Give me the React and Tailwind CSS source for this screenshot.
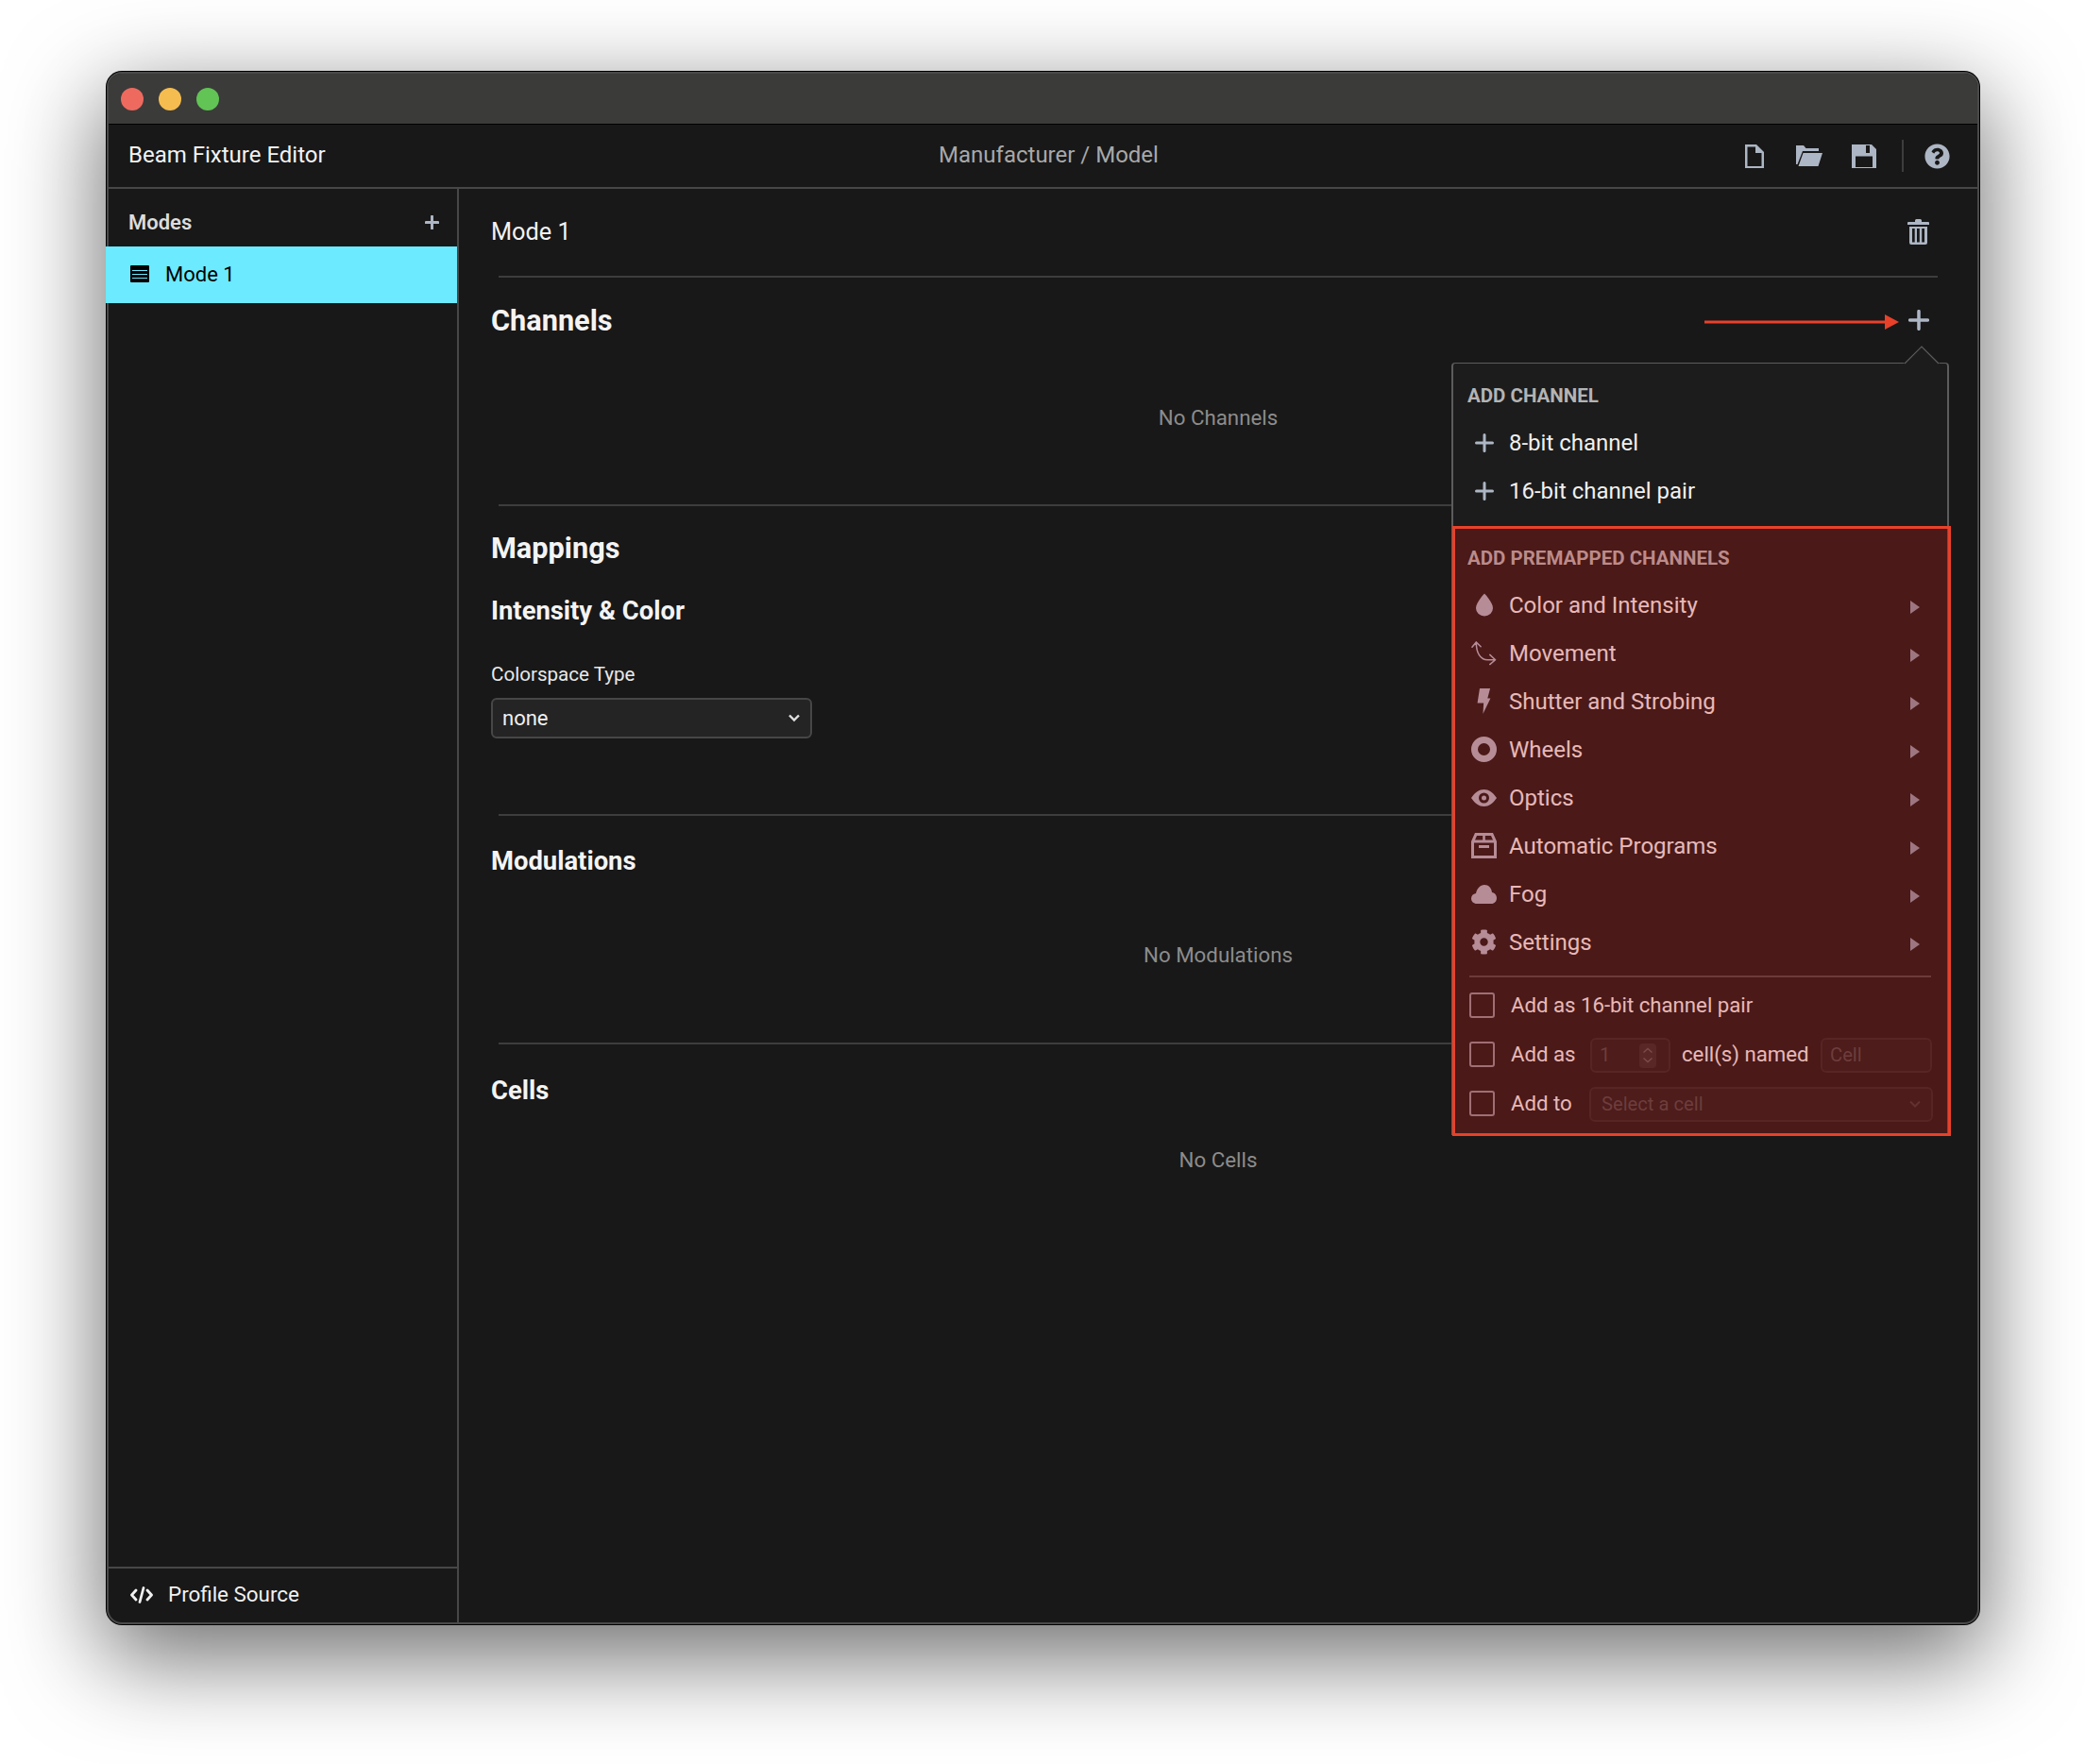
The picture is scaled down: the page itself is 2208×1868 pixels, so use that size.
import React from "react";
import { FaCog, FaQuestionCircle } from "react-icons/fa";

const Plus = ({ size = 20, w = 3 }) => (
  <svg width={size} height={size} viewBox="0 0 20 20" fill="none" stroke="currentColor" strokeWidth={w} strokeLinecap="round">
    <path d="M10 1.5V18.5M1.5 10H18.5" />
  </svg>
);

const Drop = () => (
  <svg width="18" height="25" viewBox="0 0 18 24" fill="currentColor">
    <path d="M9 0C9 0 0 9.5 0 15.5A9 8.5 0 0 0 18 15.5C18 9.5 9 0 9 0Z" />
  </svg>
);

const Move = () => (
  <svg width="28" height="27" viewBox="0 0 28 27" fill="none" stroke="currentColor" strokeWidth="1.6" strokeLinecap="round" strokeLinejoin="round">
    <path d="M1 7L5.5 1.5L10.5 6.5M5.5 2C5.5 13 10 21 18 21H26.5M20.5 15.5L26.5 21L20.5 26" />
  </svg>
);

const Bolt = () => (
  <svg width="15" height="27" viewBox="0 0 40 78" fill="currentColor">
    <path d="M7 0H39L31 30H40L17 78L19 45H0Z" />
  </svg>
);

const Ring = () => (
  <svg width="27" height="27" viewBox="0 0 27 27" fill="none" stroke="currentColor" strokeWidth="7">
    <circle cx="13.5" cy="13.5" r="10" />
  </svg>
);

const Eye = () => (
  <svg width="27" height="18" viewBox="0 0 27 18" fill="currentColor" fillRule="evenodd">
    <path d="M0 9C4 3 8.5 0 13.5 0C18.5 0 23 3 27 9C23 15 18.5 18 13.5 18C8.5 18 4 15 0 9ZM8 9A5.5 5.5 0 1 0 19 9A5.5 5.5 0 1 0 8 9ZM11 9A2.5 2.5 0 1 0 16 9A2.5 2.5 0 1 0 11 9Z" />
  </svg>
);

const Box = () => (
  <svg width="27" height="27" viewBox="0 0 27 27" fill="currentColor" fillRule="evenodd">
    <path d="M4 0H23L27 9V27H0V9ZM6 3H12.2V7.5H4ZM14.8 3H21L23 7.5H14.8ZM3 10.5H24V24H3ZM8 13H19V16H8Z" />
  </svg>
);

const Cloud = () => (
  <svg width="27" height="20" viewBox="0 0 27 20" fill="currentColor">
    <path d="M6 20C2.5 20 0 17.5 0 14.5C0 11.5 2 9.5 5 9C6 4 9.5 0 14 0C18.5 0 21.5 3.5 22 8C25 8.5 27 11 27 14C27 17.5 24.5 20 21.5 20Z" />
  </svg>
);

const FileIcon = () => (
  <svg width="20" height="25" viewBox="0 0 20 25" fill="currentColor" fillRule="evenodd">
    <path d="M0 0H12L20 8V25H0ZM2.5 2.5H11V9H17.5V23H2.5Z" />
  </svg>
);

const FolderIcon = () => (
  <svg width="28" height="22" viewBox="0 0 28 22" fill="currentColor">
    <path d="M0 0H8L10.5 3H24V6H7L1.5 20H0ZM7.5 8H28L23.5 22H2.5Z" />
  </svg>
);

const SaveIcon = () => (
  <svg width="26" height="25" viewBox="0 0 26 25" fill="currentColor" fillRule="evenodd">
    <path d="M0 0H21L26 5V25H0ZM4 12.5H22V24H4ZM15 1H19V9H15Z" />
  </svg>
);

const TrashIcon = () => (
  <svg width="23" height="27" viewBox="0 0 23 27" fill="currentColor" fillRule="evenodd">
    <path d="M8 1.5Q8 0 9.5 0H13.5Q15 0 15 1.5V3H22Q23 3 23 4V6H0V4Q0 3 1 3H8Z" />
    <path d="M2 8H21V25Q21 27 19 27H4Q2 27 2 25ZM5 10V24.5H7.7V10ZM10 10V24.5H12.8V10ZM15.2 10V24.5H18V10Z" />
  </svg>
);

const ListIcon = () => (
  <svg width="20" height="18" viewBox="0 0 20 18" fill="currentColor" fillRule="evenodd">
    <path d="M1 0H19Q20 0 20 1V17Q20 18 19 18H1Q0 18 0 17V1Q0 0 1 0ZM2 5V6H18V5ZM2 9V10H18V9ZM2 13V14H18V13Z" />
  </svg>
);

const CodeIcon = () => (
  <svg width="24" height="18" viewBox="0 0 24 18" fill="none" stroke="currentColor" strokeWidth="2.8" strokeLinecap="round" strokeLinejoin="round">
    <path d="M6 4L1.5 9L6 14M18 4L22.5 9L18 14M14 1.5L10 16.5" />
  </svg>
);

const Chevron = ({ className, w = 2 }) => (
  <svg width="14" height="9" viewBox="0 0 14 9" fill="none" stroke="currentColor" strokeWidth={w} className={className}>
    <path d="M2 1.5L7 6.5L12 1.5" />
  </svg>
);

const premapped = [
  { label: "Color and Intensity", icon: <Drop /> },
  { label: "Movement", icon: <Move /> },
  { label: "Shutter and Strobing", icon: <Bolt /> },
  { label: "Wheels", icon: <Ring /> },
  { label: "Optics", icon: <Eye /> },
  { label: "Automatic Programs", icon: <Box /> },
  { label: "Fog", icon: <Cloud /> },
  { label: "Settings", icon: <FaCog size={27} /> },
];

const Divider = () => <div className="h-[2px] mx-[42px] bg-[#3d3d3d]" />;

const EmptyText = ({ children, className }) => (
  <div className={`flex items-center justify-center text-[22.3px] text-[#8c8c8c] ${className}`}>{children}</div>
);

const MenuRow = ({ icon, label, submenu }) => (
  <div className="flex items-center h-[51px] pl-[19px] pr-[29px] text-[24px] text-[#f0f0f0]">
    <span className="w-[27px] flex justify-center text-[#adb6c4]">{icon}</span>
    <span className="ml-[13px] flex-1">{label}</span>
    {submenu && (
      <svg width="10" height="14" viewBox="0 0 10 14" className="mt-[5px] text-[#8c99a8]" fill="currentColor">
        <path d="M0 0L10 7L0 14Z" />
      </svg>
    )}
  </div>
);

const CheckRow = ({ children }) => (
  <div className="flex items-center h-[52px] pl-[17px] text-[22.2px] text-[#f0f0f0]">
    <span className="w-[27px] h-[27px] mb-[2px] rounded-[3px] border-2 border-[#8f8f98] mr-[17px] shrink-0" />
    {children}
  </div>
);

const Disabled = ({ className, children }) => (
  <div className={`h-[37px] mt-[1px] rounded-[6px] border-2 border-[#2c2c2c] bg-[#202020] flex items-center text-[20.2px] text-[#4c4c4c] ${className}`}>
    {children}
  </div>
);

export default function App() {
  return (
    <div className="w-full h-[1868px] bg-white pt-[76px] pl-[113px] [font-family:Roboto,sans-serif] overflow-hidden">
      <div className="relative w-[1983px] h-[1644px] flex flex-col rounded-[16px] border-2 border-[#4a4a4a] bg-[#181818] shadow-[0_0_0_1px_#000,0_31px_98px_6px_rgba(0,0,0,0.56)]">
        <div className="h-[54px] shrink-0 flex items-center gap-[16px] pl-[13px] rounded-t-[14px] bg-[#3b3b3a] border-b border-black">
          <span className="w-[24px] h-[24px] rounded-full bg-[#ee6a5f]" />
          <span className="w-[24px] h-[24px] rounded-full bg-[#f5bd4f]" />
          <span className="w-[24px] h-[24px] rounded-full bg-[#61c454]" />
        </div>

        <header className="h-[68px] shrink-0 flex items-center border-b-2 border-[#474747] pl-[21px] pr-[29px]">
          <div className="flex-1 pb-[2px] text-[24px] text-[#f2f2f2]">Beam Fixture Editor</div>
          <div className="ml-[20px] pb-[2px] text-[24px] text-[#a8a8a8]">Manufacturer / Model</div>
          <div className="flex-1 flex items-center justify-end text-[#adb6c4]">
            <FileIcon />
            <span className="ml-[34px]"><FolderIcon /></span>
            <span className="ml-[31px]"><SaveIcon /></span>
            <span className="ml-[27px] w-[2px] h-[34px] bg-[#3d3d3d]" />
            <span className="ml-[22px] flex"><FaQuestionCircle size={27} /></span>
          </div>
        </header>

        <div className="flex-1 flex min-h-0">
          <aside className="w-[371px] shrink-0 flex flex-col border-r-2 border-[#474747]">
            <div className="h-[61px] pt-[9px] flex items-center justify-between pl-[21px] pr-[19px]">
              <span className="text-[22px] font-semibold text-[#dcdcdc]">Modes</span>
              <span className="text-[#adb6c4]"><Plus size={15} w={4} /></span>
            </div>
            <div className="h-[60px] -ml-[3px] pb-[2px] flex items-center bg-[#6ceaff] pl-[26px] text-black text-[22px]">
              <ListIcon />
              <span className="ml-[17px]">Mode 1</span>
            </div>
            <div className="flex-1" />
            <div className="h-[59px] pb-[1px] flex items-center border-t-2 border-[#474747] pl-[23px] text-[22.4px] text-[#f0f0f0]">
              <CodeIcon />
              <span className="ml-[16px]">Profile Source</span>
            </div>
          </aside>

          <main className="relative flex-1 min-w-0">
            <div className="h-[92px] pb-[1px] pl-[34px] pr-[51px] flex items-center justify-between">
              <span className="text-[25.3px] text-[#f2f2f2]">Mode 1</span>
              <span className="text-[#adb6c4]"><TrashIcon /></span>
            </div>
            <Divider />

            <div className="h-[90px] pl-[34px] pr-[51px] flex items-center justify-between">
              <h2 className="pt-[2px] text-[30.7px] font-bold text-[#f4f4f4]">Channels</h2>
              <span className="text-[#adb6c4]"><Plus size={22} w={3.2} /></span>
            </div>
            <EmptyText className="h-[118px] mb-[32px]">No Channels</EmptyText>
            <Divider />

            <div className="h-[89px] pt-[2px] pl-[34px] flex items-center">
              <h2 className="text-[30.7px] font-bold text-[#f4f4f4]">Mappings</h2>
            </div>
            <div className="h-[45px] pl-[34px] flex items-center">
              <h3 className="text-[27.4px] font-bold text-[#f4f4f4]">Intensity &amp; Color</h3>
            </div>
            <div className="mt-[31px] h-[26px] pl-[34px] flex items-center text-[20.6px] text-[#e8e8e8]">Colorspace Type</div>
            <div className="mt-[12px] mb-[80px] ml-[34px] w-[340px] h-[43px] rounded-[6px] border-2 border-[#474747] bg-[#242424] flex items-center justify-between pl-[10px] pr-[10px] text-[22px] text-[#f0f0f0]">
              none
              <Chevron className="text-[#e0e0e0]" w={2.4} />
            </div>
            <Divider />

            <div className="h-[97px] pl-[34px] flex items-center">
              <h2 className="text-[27.4px] font-bold text-[#f4f4f4]">Modulations</h2>
            </div>
            <EmptyText className="h-[102px] mb-[41px]">No Modulations</EmptyText>
            <Divider />

            <div className="h-[100px] pl-[34px] flex items-center">
              <h2 className="text-[27.4px] font-bold text-[#f4f4f4]">Cells</h2>
            </div>
            <EmptyText className="h-[46px]">No Cells</EmptyText>

            <svg width="206" height="16" viewBox="0 0 206 16" className="absolute left-[1319px] top-[133px]">
              <path d="M0 8H193" stroke="#e8412a" strokeWidth="3" />
              <path d="M191 0L206 8L191 16Z" fill="#e8412a" />
            </svg>

            <div className="absolute left-[1051px] top-[184px] w-[527px] h-[818px] bg-[#1c1c1c] border-x-2 border-t border-[#5c5c5c] rounded-t-[4px]">
              <svg width="38" height="21" viewBox="0 0 38 21" className="absolute left-[477px] -top-[19px]">
                <path d="M0 19L19 1L38 19V21H0Z" fill="#1c1c1c" />
                <path d="M1 19L19 1L37 19" fill="none" stroke="#5c5c5c" strokeWidth="1.2" />
              </svg>

              <div className="h-[32px] mt-[18px] ml-[15px] flex items-center text-[20.5px] font-bold uppercase text-[#b4b4b4]">Add Channel</div>
              <div className="mt-[8px] pb-[13px]">
                <MenuRow icon={<Plus />} label="8-bit channel" />
                <MenuRow icon={<Plus />} label="16-bit channel pair" />
              </div>

              <div className="h-[32px] mt-[17px] ml-[15px] flex items-center text-[20.5px] font-bold uppercase text-[#b4b4b4]">Add Premapped Channels</div>
              <div className="mt-[8px]">
                {premapped.map((item) => (
                  <MenuRow key={item.label} icon={item.icon} label={item.label} submenu />
                ))}
              </div>
              <div className="h-[2px] mt-[10px] mb-[4px] mx-[17px] bg-[#4a4a4a]" />

              <CheckRow>Add as 16-bit channel pair</CheckRow>
              <CheckRow>
                <span className="w-[84px] shrink-0">Add as</span>
                <Disabled className="w-[85px] pl-[8px] justify-between pr-[13px]">
                  1
                  <span className="w-[18px] h-[26px] rounded-[4px] bg-[#2f2f2f] flex flex-col items-center justify-center gap-[3px] text-[#5e5e5e]">
                    <svg width="12" height="7" viewBox="0 0 12 7" fill="none" stroke="currentColor" strokeWidth="1.5">
                      <path d="M1.5 5.5L6 1.5L10.5 5.5" />
                    </svg>
                    <svg width="12" height="7" viewBox="0 0 12 7" fill="none" stroke="currentColor" strokeWidth="1.5">
                      <path d="M1.5 1.5L6 5.5L10.5 1.5" />
                    </svg>
                  </span>
                </Disabled>
                <span className="ml-[12px] w-[147px] shrink-0">cell(s) named</span>
                <Disabled className="w-[118px] pl-[8px]">Cell</Disabled>
              </CheckRow>
              <CheckRow>
                <span className="w-[83px] shrink-0">Add to</span>
                <Disabled className="w-[364px] pl-[11px] pr-[10px] justify-between">
                  Select a cell
                  <Chevron className="text-[#3c3c3c]" />
                </Disabled>
              </CheckRow>

              <div className="absolute -left-[1px] -right-[4px] top-[172px] -bottom-[1px] border-[3px] border-[#e8412a] bg-[rgba(212,16,12,0.25)] pointer-events-none" />
            </div>
          </main>
        </div>
      </div>
    </div>
  );
}
